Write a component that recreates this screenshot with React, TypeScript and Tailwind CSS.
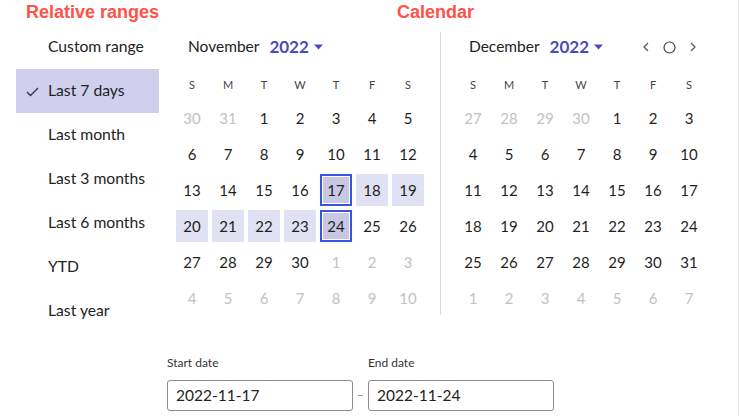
import { ReactNode } from "react";

const font = { fontFamily: "Lato, 'Open Sans', sans-serif" };
const titleFont = { fontFamily: "'Liberation Sans', Arial, sans-serif" };

const ranges = ["Custom range", "Last 7 days", "Last month", "Last 3 months", "Last 6 months", "YTD", "Last year"];
const weekdays = ["S", "M", "T", "W", "T", "F", "S"];

type Day = { d: number; muted?: boolean; range?: boolean; edge?: boolean };

function buildMonth(lead: number[], count: number, trail: number[], rangeFrom = 0, rangeTo = 0): Day[] {
  const days: Day[] = lead.map((d) => ({ d, muted: true }));
  for (let i = 1; i <= count; i++) {
    days.push({
      d: i,
      range: i >= rangeFrom && i <= rangeTo,
      edge: i === rangeFrom || i === rangeTo,
    });
  }
  trail.forEach((d) => days.push({ d, muted: true }));
  return days;
}

const november = buildMonth([30, 31], 30, [1, 2, 3, 4, 5, 6, 7, 8, 9, 10], 17, 24);
const december = buildMonth([27, 28, 29, 30], 31, [1, 2, 3, 4, 5, 6, 7]);

function Caret() {
  return (
    <svg width="9" height="6" viewBox="0 0 9 6" className="ml-[5px]">
      <path d="M0 0.5 L9 0.5 L4.5 5.5 Z" fill="#4a4ab8" />
    </svg>
  );
}

function MonthHeader({ month, children }: { month: string; children?: ReactNode }) {
  return (
    <div className="h-11 flex items-center pl-3 pr-2">
      <span className="text-[15.5px] text-[#222]">{month}</span>
      <span className="ml-[10px] text-[17px] font-bold text-[#4a4ab8]">2022</span>
      <Caret />
      {children}
    </div>
  );
}

function MonthGrid({ days }: { days: Day[] }) {
  return (
    <div>
      <div className="grid grid-cols-[repeat(7,32px)] gap-x-1 h-[33px] items-center">
        {weekdays.map((w, i) => (
          <div key={i} className="text-center text-[11px] text-[#444]">
            {w}
          </div>
        ))}
      </div>
      <div className="grid grid-cols-[repeat(7,32px)] auto-rows-[32px] gap-1">
        {days.map((day, i) => (
          <div
            key={i}
            className={
              "flex items-center justify-center text-[15px] " +
              (day.muted ? "text-[#c2c2c2] " : "text-[#1f1f1f] ") +
              (day.edge
                ? "bg-[#c8c8e6] border-2 border-[#3656df] shadow-[inset_0_0_0_1px_#ffffff]"
                : day.range
                ? "bg-[#e1e1f4]"
                : "")
            }
          >
            {day.d}
          </div>
        ))}
      </div>
    </div>
  );
}

function DateField({ label, value }: { label: string; value: string }) {
  return (
    <div className="flex flex-col">
      <span className="text-[12px] text-[#333] leading-4 mb-[9px]">{label}</span>
      <div className="w-[186px] h-[31px] border border-[#8c8c8c] rounded-[3px] flex items-center pl-2 text-[15.5px] text-[#222]">
        {value}
      </div>
    </div>
  );
}

export default function App() {
  return (
    <div className="w-[739px] h-[416px] bg-white border-r border-[#e6e6e6] flex flex-col" style={font}>
      <div className="h-[25px] flex items-center pl-[26px] text-[18px] font-bold text-[#ff5147]" style={titleFont}>
        <span>Relative ranges</span>
        <span className="ml-[238px]">Calendar</span>
      </div>

      <div className="flex">
        <div className="ml-4 w-[143px] flex flex-col">
          {ranges.map((r) => {
            const active = r === "Last 7 days";
            return (
              <div
                key={r}
                className={"relative h-11 flex items-center pl-8 text-[15.7px] text-[#222] " + (active ? "bg-[#d0d0ee]" : "")}
              >
                {active && (
                  <svg width="13" height="10" viewBox="0 0 13 10" className="absolute left-[10px] top-[18px]">
                    <path d="M1 5 L4.5 8.5 L12 1" fill="none" stroke="#333" strokeWidth="1.3" />
                  </svg>
                )}
                {r}
              </div>
            );
          })}
        </div>

        <div className="ml-[17px] flex items-start">
          <div>
            <MonthHeader month="November" />
            <MonthGrid days={november} />
          </div>
          <div className="mx-4 mt-[7px] w-px h-[283px] bg-[#d9d9d9]" />
          <div>
            <MonthHeader month="December">
              <div className="ml-auto flex items-center gap-[13px] text-[#555]">
                <svg width="8" height="10" viewBox="0 0 8 10">
                  <path d="M6 1 L2 5 L6 9" fill="none" stroke="#555" strokeWidth="1.2" />
                </svg>
                <svg width="13" height="13" viewBox="0 0 13 13">
                  <circle cx="6.5" cy="6.5" r="5.5" fill="none" stroke="#444" strokeWidth="1.2" />
                </svg>
                <svg width="8" height="10" viewBox="0 0 8 10">
                  <path d="M2 1 L6 5 L2 9" fill="none" stroke="#555" strokeWidth="1.2" />
                </svg>
              </div>
            </MonthHeader>
            <MonthGrid days={december} />
          </div>
        </div>
      </div>

      <div className="mt-[22px] ml-[167px] flex items-end">
        <DateField label="Start date" value="2022-11-17" />
        <div className="w-[15px] h-[31px] flex items-center justify-center">
          <div className="w-[5px] h-px bg-[#999]" />
        </div>
        <DateField label="End date" value="2022-11-24" />
      </div>
    </div>
  );
}
